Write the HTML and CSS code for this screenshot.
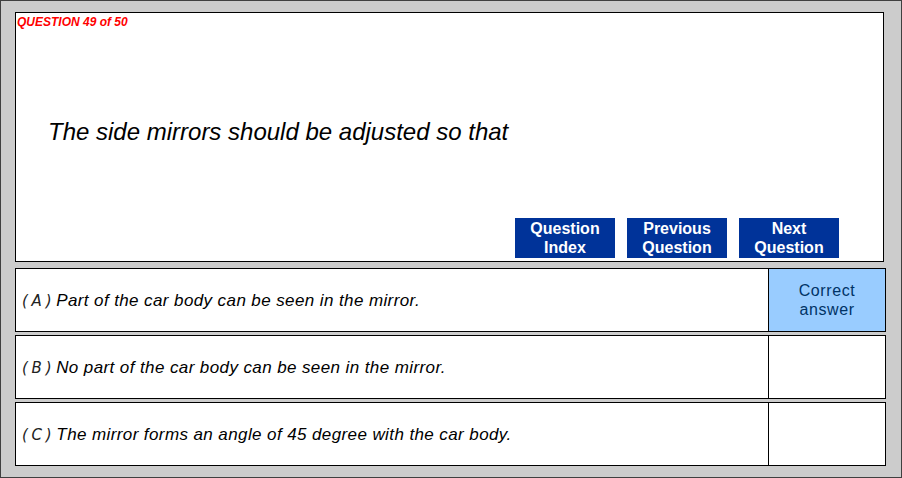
FILE: index.html
```html
<!DOCTYPE html>
<html lang="en">
<head>
    <meta charset="UTF-8">
    <title>Question 49 of 50</title>
    <link rel="stylesheet" href="styles.css">
</head>
<body>
    <div class="frame">
        <div class="question-panel">
            <div class="counter">QUESTION 49 of 50</div>
            <p class="question-text">The side mirrors should be adjusted so that</p>
            <div class="nav">
                <a class="nav-btn" href="#">Question<br>Index</a>
                <a class="nav-btn" href="#">Previous<br>Question</a>
                <a class="nav-btn" href="#">Next<br>Question</a>
            </div>
        </div>

        <div class="answer">
            <div class="answer-text"><span class="answer-label">( A )</span> Part of the car body can be seen in the mirror.</div>
            <div class="answer-mark correct">Correct<br>answer</div>
        </div>
        <div class="answer">
            <div class="answer-text"><span class="answer-label">( B )</span> No part of the car body can be seen in the mirror.</div>
            <div class="answer-mark"></div>
        </div>
        <div class="answer">
            <div class="answer-text"><span class="answer-label">( C )</span> The mirror forms an angle of 45 degree with the car body.</div>
            <div class="answer-mark"></div>
        </div>
    </div>
</body>
</html>
```

FILE: styles.css
```css
body {
    margin: 0;
    font-family: "Liberation Sans", Arial, sans-serif;
    background-color: #fff;
}
.frame {
    width: 902px;
    height: 478px;
    box-sizing: border-box;
    border: 1px solid #404040;
    background-color: #cccccc;
    padding: 11px 15px 0 14px;
}
.question-panel {
    height: 250px;
    box-sizing: border-box;
    margin-right: 2px;
    border: 1px solid #000;
    background-color: #fff;
    display: flex;
    flex-direction: column;
}
.counter {
    color: #ff0000;
    font-size: 12px;
    font-weight: bold;
    font-style: italic;
    line-height: 14px;
    padding: 2px 0 0 1px;
}
.question-text {
    margin: 89px 0 0 32px;
    font-size: 24px;
    font-style: italic;
    line-height: 28px;
    color: #000;
}
.nav {
    margin-top: auto;
    margin-bottom: 3px;
    margin-right: 44px;
    display: flex;
    justify-content: flex-end;
    gap: 12px;
}
.nav-btn {
    width: 100px;
    height: 40px;
    box-sizing: border-box;
    padding-top: 1px;
    background-color: #003399;
    color: #fff;
    font-size: 16px;
    font-weight: bold;
    line-height: 19px;
    text-align: center;
    text-decoration: none;
}
.answer {
    height: 64px;
    box-sizing: border-box;
    margin-top: 6px;
    border: 1px solid #000;
    background-color: #fff;
    display: flex;
}
.answer + .answer {
    margin-top: 3px;
}
.answer-text {
    flex: 1;
    display: flex;
    align-items: center;
    padding: 1px 0 0 6px;
    font-size: 17px;
    letter-spacing: 0.4px;
    font-style: italic;
    color: #000;
    white-space: pre;
}
.answer-label {
    color: #222;
    font-size: 15px;
    letter-spacing: -0.5px;
    font-family: "DejaVu Sans", sans-serif;
    font-weight: 200;
}
.answer-mark {
    width: 116px;
    border-left: 1px solid #000;
}
.answer-mark.correct {
    background-color: #99ccff;
    color: #003366;
    font-size: 16px;
    letter-spacing: 0.6px;
    line-height: 19px;
    text-align: center;
    display: flex;
    align-items: center;
    justify-content: center;
}
```
